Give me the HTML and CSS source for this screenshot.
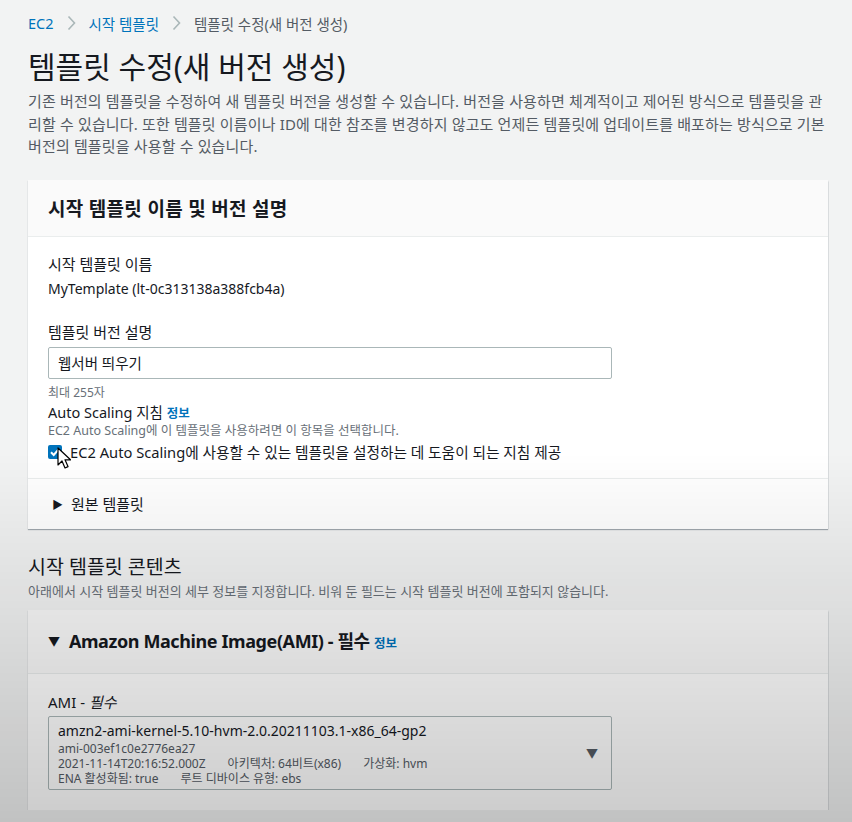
FILE: index.html
```html
<!DOCTYPE html>
<html lang="ko">
<head>
    <meta charset="UTF-8">
    <meta name="viewport" content="width=device-width, initial-scale=1.0">
    <title>템플릿 수정(새 버전 생성)</title>
    <link rel="stylesheet" href="styles.css">
</head>
<body>
    <div class="page">
        <nav class="breadcrumb">
            <a href="#">EC2</a>
            <svg class="sep" width="9" height="16" viewBox="0 0 9 16"><path d="M1.5 1.5l6 6.5-6 6.5" fill="none" stroke="#aab7b8" stroke-width="1.6"/></svg>
            <a href="#">시작 템플릿</a>
            <svg class="sep" width="9" height="16" viewBox="0 0 9 16"><path d="M1.5 1.5l6 6.5-6 6.5" fill="none" stroke="#aab7b8" stroke-width="1.6"/></svg>
            <span class="current">템플릿 수정(새 버전 생성)</span>
        </nav>

        <h1>템플릿 수정(새 버전 생성)</h1>
        <p class="intro">기존 버전의 템플릿을 수정하여 새 템플릿 버전을 생성할 수 있습니다. 버전을 사용하면 체계적이고 제어된 방식으로 템플릿을 관리할 수 있습니다. 또한 템플릿 이름이나 ID에 대한 참조를 변경하지 않고도 언제든 템플릿에 업데이트를 배포하는 방식으로 기본 버전의 템플릿을 사용할 수 있습니다.</p>

        <div class="card">
            <div class="card-header">
                <h2>시작 템플릿 이름 및 버전 설명</h2>
            </div>
            <div class="card-body">
                <div class="field">
                    <div class="label">시작 템플릿 이름</div>
                    <div class="value">MyTemplate (lt-0c313138a388fcb4a)</div>
                </div>
                <div class="field short">
                    <div class="label">템플릿 버전 설명</div>
                    <input class="text-input" type="text" value="웹서버 띄우기">
                    <div class="constraint">최대 255자</div>
                </div>
                <div class="field tight">
                    <div class="label">Auto Scaling 지침 <a class="info" href="#">정보</a></div>
                    <div class="hint">EC2 Auto Scaling에 이 템플릿을 사용하려면 이 항목을 선택합니다.</div>
                    <label class="check-row">
                        <span class="checkbox">
                            <svg width="14" height="14" viewBox="0 0 14 14"><path d="M3 7.2l2.7 2.8L11 4" fill="none" stroke="#fff" stroke-width="2"/></svg>
                            <svg class="cursor" width="14" height="22" viewBox="0 0 14 22"><path d="M1 1v17l4-4 3 7 3-1.4-3-6.8h5.5z" fill="#fff" stroke="#000" stroke-width="1.2" stroke-linejoin="round"/></svg>
                        </span>
                        EC2 Auto Scaling에 사용할 수 있는 템플릿을 설정하는 데 도움이 되는 지침 제공
                    </label>
                </div>
            </div>
            <div class="card-footer">
                <span class="caret">&#9654;</span> 원본 템플릿
            </div>
        </div>

        <div class="section-head">
            <h2>시작 템플릿 콘텐츠</h2>
            <p>아래에서 시작 템플릿 버전의 세부 정보를 지정합니다. 비워 둔 필드는 시작 템플릿 버전에 포함되지 않습니다.</p>
        </div>

        <div class="card">
            <div class="card-header ami-header">
                <h2><span class="caret-down">&#9660;</span> Amazon Machine Image(AMI) - 필수 <a class="info" href="#">정보</a></h2>
            </div>
            <div class="card-body ami-body">
                <div class="label">AMI - <i>필수</i></div>
                <div class="select">
                    <div class="select-text">
                        <div class="ami-name">amzn2-ami-kernel-5.10-hvm-2.0.20211103.1-x86_64-gp2</div>
                        <div class="ami-meta">ami-003ef1c0e2776ea27</div>
                        <div class="ami-meta"><span>2021-11-14T20:16:52.000Z</span><span>아키텍처: 64비트(x86)</span><span>가상화: hvm</span></div>
                        <div class="ami-meta"><span>ENA 활성화됨: true</span><span>루트 디바이스 유형: ebs</span></div>
                    </div>
                    <span class="select-arrow">&#9660;</span>
                </div>
            </div>
        </div>
    </div>
</body>
</html>
```

FILE: styles.css
```css
* {
    margin: 0;
    padding: 0;
    box-sizing: border-box;
}

body {
    font-family: 'Noto Sans', 'Noto Sans CJK KR', sans-serif;
    background-color: #f2f3f3;
    color: #16191f;
    font-size: 14px;
    overflow: hidden;
}

/* video vignette darkening toward the bottom */
body::after {
    content: '';
    position: fixed;
    inset: 0;
    pointer-events: none;
    background: linear-gradient(to bottom, rgba(0, 0, 0, 0) 0%, rgba(0, 0, 0, 0) 55%, rgba(0, 0, 0, 0.2) 100%);
}

.page {
    padding: 12px 24px 0 28px;
}

.breadcrumb {
    font-size: 14.5px;
    color: #545b64;
    display: flex;
    align-items: center;
    gap: 13px;
    height: 22px;
}

.breadcrumb a {
    color: #0073bb;
    text-decoration: none;
}

h1 {
    font-size: 30px;
    font-weight: 400;
    margin-top: 15px;
    line-height: 36px;
}

.intro {
    color: #545b64;
    font-size: 15px;
    line-height: 22.5px;
    margin-top: 5px;
    letter-spacing: 0.15px;
}

.card {
    background-color: #ffffff;
    box-shadow: 0 1px 1px 0 rgba(0, 22, 40, 0.3), 1px 1px 1px -1px rgba(0, 22, 40, 0.3);
    margin-top: 22px;
    width: 800px;
}

.card-header {
    background-color: #fafafa;
    border-bottom: 1px solid #eaeded;
    height: 57px;
    padding: 0 20px;
    display: flex;
    align-items: center;
}

.card-header h2 {
    font-size: 19px;
    font-weight: 700;
    letter-spacing: 0.3px;
}

.card-body {
    padding: 17px 20px 16px;
}

.field {
    margin-bottom: 23px;
}

.field.short {
    margin-bottom: 1px;
}

.field.tight {
    margin-bottom: 0;
}

.label {
    font-size: 15px;
    line-height: 20px;
    color: #16191f;
    margin-bottom: 5px;
}

.value {
    font-size: 14px;
    line-height: 20px;
}

.text-input {
    display: block;
    width: 564px;
    height: 32px;
    border: 1px solid #aab7b8;
    border-radius: 2px;
    padding: 0 9px;
    font-family: inherit;
    font-size: 14.5px;
    color: #16191f;
    background: #fff;
    margin-top: 3px;
}

.constraint {
    font-size: 12px;
    color: #687078;
    margin-top: 6px;
    line-height: 16px;
}

.info {
    color: #0073bb;
    font-size: 12.5px;
    font-weight: 700;
    text-decoration: none;
    letter-spacing: 0;
}

.field.tight .label {
    font-size: 14.5px;
    margin-bottom: 3px;
}

.hint {
    font-size: 12.5px;
    color: #687078;
    line-height: 16px;
    margin-top: -4px;
}

.check-row {
    display: flex;
    align-items: center;
    gap: 8px;
    margin-top: 3px;
    font-size: 14.7px;
    line-height: 20px;
}

.checkbox {
    position: relative;
    width: 14px;
    height: 14px;
    background-color: #0073bb;
    border-radius: 2px;
    display: flex;
}

.cursor {
    position: absolute;
    left: 9px;
    top: 2px;
}

.card-footer {
    border-top: 1px solid #eaeded;
    height: 51px;
    padding: 0 24px;
    display: flex;
    align-items: center;
    gap: 8px;
    font-size: 15px;
}

.caret {
    font-size: 11px;
    color: #16191f;
}

.section-head {
    margin-top: 26px;
}

.section-head h2 {
    font-size: 19.5px;
    font-weight: 400;
    line-height: 24px;
}

.section-head p {
    font-size: 13px;
    color: #687078;
    line-height: 18px;
    margin-top: 3px;
}

.section-head + .card {
    margin-top: 10px;
}

.ami-header {
    height: 64px;
    padding-bottom: 3px;
}

.ami-header h2 {
    font-size: 18px;
    letter-spacing: -0.4px;
}

.caret-down {
    font-size: 12px;
    margin-right: 5px;
    vertical-align: 2px;
}

.ami-body {
    padding: 18px 20px 20px;
}

.ami-body .label {
    margin-bottom: 4px;
}

.ami-body .label i {
    font-style: italic;
}

.select {
    width: 564px;
    border: 1px solid #aab7b8;
    border-radius: 2px;
    padding: 4px 9px 3px;
    display: flex;
    align-items: center;
    justify-content: space-between;
    margin-top: 2px;
}

.ami-name {
    font-size: 14px;
    line-height: 20px;
}

.ami-meta {
    font-size: 12px;
    color: #545b64;
    line-height: 15px;
    display: flex;
    gap: 22px;
}

.select-arrow {
    font-size: 12px;
    color: #545b64;
    margin-right: 4px;
}
```
